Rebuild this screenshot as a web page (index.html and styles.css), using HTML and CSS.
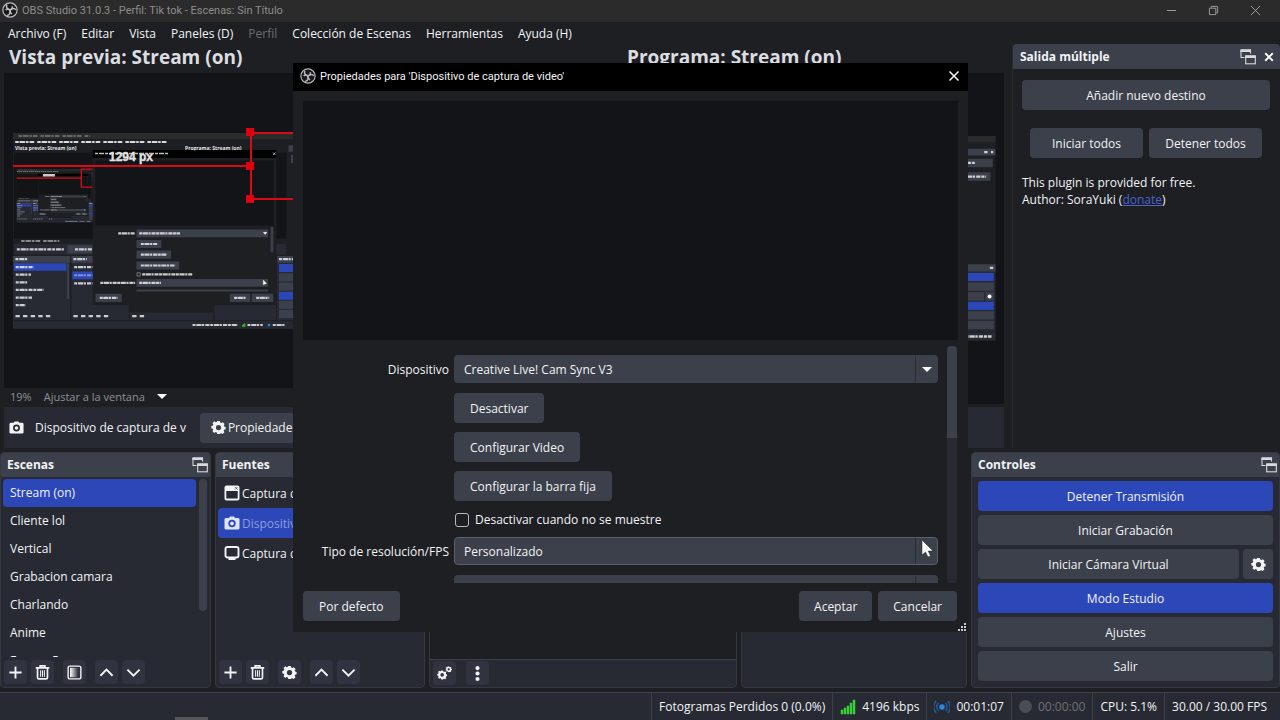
FILE: index.html
```html
<!DOCTYPE html>
<html lang="es">
<head>
<meta charset="utf-8">
<title>OBS Studio 31.0.3</title>
<link rel="stylesheet" href="styles.css">
</head>
<body>
<svg class="defs" aria-hidden="true">
  <defs>
    <linearGradient id="fade" x1="0" x2="1"><stop offset="0" stop-color="#fff"/><stop offset="1" stop-color="#272a33"/></linearGradient>
    <symbol id="i-obs" viewBox="0 0 24 24">
      <circle cx="12" cy="12" r="10.7" fill="#17181b" stroke="currentColor" stroke-width="1.8"/>
      <g fill="none" stroke="currentColor" stroke-width="2.2">
        <path d="M7.2 4.2c-1.2 3.6 0.6 6.8 4.9 7.6 2.6-.6 4-3 3.2-5.4"/>
        <path d="M7.2 4.2c-1.2 3.6 0.6 6.8 4.9 7.6 2.6-.6 4-3 3.2-5.4" transform="rotate(120 12 12)"/>
        <path d="M7.2 4.2c-1.2 3.6 0.6 6.8 4.9 7.6 2.6-.6 4-3 3.2-5.4" transform="rotate(240 12 12)"/>
      </g>
    </symbol>
    <symbol id="i-gear" viewBox="0 0 16 16">
      <path fill="currentColor" fill-rule="evenodd" d="M6.6 1h2.8l.4 1.7 1.3.6 1.5-1 1.9 2-.9 1.5.5 1.2 1.5.4v2.4l-1.6.5-.5 1.2.9 1.5-1.9 1.9-1.5-.9-1.2.5L9.4 15H6.6l-.4-1.6-1.3-.5-1.5.9-1.8-1.900.8-1.5-.5-1.2-1.6-.4V6.500l1.600-.4.6-1.300-.9-1.500 1.900-1.900 1.500.9 1.200-.5zM8 5.200a2.800 2.800 0 1 0 0 5.600 2.800 2.800 0 0 0 0-5.600z"/>
    </symbol>
    <symbol id="i-cam" viewBox="0 0 16 16">
      <path fill="currentColor" fill-rule="evenodd" d="M5 3l1-1.500h4L11 3h3.500l1 1v9.500l-1 1h-13l-1-1V4l1-1zM8 4.800a3.700 3.700 0 1 0 0 7.400 3.700 3.700 0 0 0 0-7.400zm0 1.800a1.900 1.900 0 1 1 0 3.800 1.900 1.900 0 0 1 0-3.800z"/>
    </symbol>
    <symbol id="i-win" viewBox="0 0 16 16">
      <path fill="currentColor" fill-rule="evenodd" d="M2.500.5h11a2 2 0 0 1 2 2v11a2 2 0 0 1-2 2h-11a2 2 0 0 1-2-2v-11a2 2 0 0 1 2-2zM2.300 6v7.500h11.400V6z"/>
      <path d="M11 2l2.500 2.500M13.500 2L11 4.500" stroke="#555" stroke-width=".8"/>
    </symbol>
    <symbol id="i-mon" viewBox="0 0 16 16">
      <rect x="1.500" y="2" width="13" height="10.500" rx="2" fill="none" stroke="currentColor" stroke-width="1.900"/><path d="M4.500 13h7v2h-7z" fill="currentColor"/>
    </symbol>
    <symbol id="i-plus" viewBox="0 0 16 16"><path d="M8 1.500v13M1.500 8h13" stroke="currentColor" stroke-width="2" fill="none"/></symbol>
    <symbol id="i-trash" viewBox="0 0 16 16">
      <path d="M.8 3h14.400M5.500 2.500V1h5v1.500M2.700 4v9.200q0 1.600 1.600 1.600h7.400q1.600 0 1.600-1.600V4" stroke="currentColor" stroke-width="1.800" fill="none"/>
      <path d="M6 5.500v7M8 5.500v7M10 5.500v7" stroke="currentColor" stroke-width="1.100"/>
    </symbol>
    <symbol id="i-filter" viewBox="0 0 16 16"><rect x="1.200" y="1.200" width="13.600" height="13.600" rx="2" fill="none" stroke="currentColor" stroke-width="1.500"/><rect x="3.200" y="3" width="9" height="10" fill="url(#fade)"/></symbol>
    <symbol id="i-up" viewBox="0 0 16 16"><path d="M1.500 11.500L8 5l6.500 6.500" stroke="currentColor" stroke-width="2" fill="none"/></symbol>
    <symbol id="i-down" viewBox="0 0 16 16"><path d="M1.500 5L8 11.500 14.500 5" stroke="currentColor" stroke-width="2" fill="none"/></symbol>
    <symbol id="i-dots" viewBox="0 0 16 16"><g fill="currentColor"><circle cx="8" cy="2.200" r="2.200"/><circle cx="8" cy="8" r="2.200"/><circle cx="8" cy="13.800" r="2.200"/></g></symbol>
    <symbol id="i-gears" viewBox="0 0 16 16">
      <use href="#i-gear" x="0" y="4" width="11" height="11"/><use href="#i-gear" x="9" y="0" width="7" height="7"/>
    </symbol>
    <symbol id="i-float" viewBox="0 0 16 16">
      <path d="M1 1h9.500v3.500M1 1v7.500h3.500" fill="none" stroke="currentColor" stroke-width="1.100"/><path d="M.4.400h10.600v2.600H.4z" fill="currentColor"/>
      <rect x="5.700" y="7" width="9.600" height="7.800" fill="none" stroke="currentColor" stroke-width="1.100"/><path d="M5.200 6.400h10.700v2.600H5.200z" fill="currentColor"/>
    </symbol>
    <symbol id="i-x" viewBox="0 0 16 16"><path d="M2 2l12 12M14 2L2 14" stroke="currentColor" stroke-width="var(--w,2)" fill="none"/></symbol>

    <g id="mini">
      <path fill="#1d1f23" d="M0 0h1280v720H0z"/><path fill="#2b2b2b" d="M0 0h1280v22H0z"/>
      <path fill="#131417" d="M4 73h1001v315H4z"/>
      <g stroke="#d8d9dc" stroke-width="7" stroke-dasharray="13 3 21 3 9 4 17 11">
        <path d="M20 11h262" stroke="#666"/><path d="M8 33h562"/><path d="M30 397h140" stroke="#888"/>
      </g>
      <g fill="#272a33"><path d="M4 407h1001v41H4zM0 452h210v236H0zM215 452h210v236H215zM429 660h308v28H429zM741 452h226v236H741zM971 452h309v236H971zM0 692h1280v28H0z"/></g>
      <g fill="#3c404b"><path d="M200 413h93v30H200zM0 452h210v25H0zM215 452h210v25H215zM971 452h309v25H971zM1013 45h267v24h-267zM1022 80h248v30h-248zM1030 128h113v30h-113zM1149 128h113v30h-113zM978 516h296v29H978zM978 550h262v29H978zM1245 550h29v29h-29zM978 617h296v29H978zM978 651h296v29H978zM198 480h8v130h-8z"/></g>
      <path fill="#2c47b8" d="M3 479h193v27H3zM218 509h80v29h-80zM978 482h296v29H978zM978 584h296v29H978z"/>
      <g stroke="#e8e9ed" stroke-width="8" stroke-dasharray="11 3 19 2 8 4 15 3" opacity=".85">
        <path d="M14 428h173M228 428h65M9 464h46M222 464h50M10 493h66M10 521h56M10 549h42M10 577h102M10 605h60M10 633h36M225 493h68M225 553h68M1067 95h140M1050 143h74M1165 143h82M978 464h60M660 706h166M862 706h56M955 706h44M1100 706h55M1174 706h92"/>
        <path d="M9 673h130M222 673h140M438 673h50M1240 57h12M1264 57h8M1260 464h12" stroke-dasharray="16 12"/><path d="M225 523h68" stroke="#8fa0e0"/>
      </g>
      <circle cx="1259" cy="565" r="7" fill="#fff"/>
      <path fill="#1d1f23" d="M293 63h675v569H293z"/><path fill="#000" d="M293 63h675v28H293z"/><path fill="#131417" d="M303 101h655v239H303z"/>
      <path fill="#3c404b" d="M454 355h484v28H454zM454 393h91v30h-91zM454 432h127v30H454zM454 472h157v30H454zM454 537h484v28H454zM454 575h484v8H454zM303 591h97v30h-97zM797 591h75v30h-75zM878 591h79v30h-79zM947 346h10v92h-10z"/>
      <g stroke="#e8e9ed" stroke-width="8" stroke-dasharray="11 2 19 2 8 3 15 2" opacity=".85"><path d="M387 369h62M464 369h150M470 408h60M470 447h95M470 487h126M475 520h186M321 551h128M464 551h80M319 606h65M813 606h44M894 606h48"/></g>
      <path d="M920 365l7 8 7-8zM920 540v18l12-5zM948 71l10 10m0-10l-10 10" fill="#fff" stroke="#fff"/>
      <path d="M456 514h12v12h-12z" fill="none" stroke="#bbb" stroke-width="2"/>
      <path d="M842 712v-6h3v6zm4 0v-9h3v9zm4 0v-12h4v12z" fill="#38d039"/><circle cx="941" cy="706" r="5" fill="#287fd4"/>
    </g>
    <clipPath id="left"><path d="M4 73h289v315H4z"/></clipPath>
  </defs>
</svg>

<div class="app">
  <header class="titlebar">
    <svg class="logo"><use href="#i-obs"/></svg>
    <span class="caption">OBS Studio 31.0.3 - Perfil: Tik tok - Escenas: Sin Título</span>
    <div class="winbtns">
      <button aria-label="Minimizar"><svg viewBox="0 0 12 12"><path d="M1 6h10" stroke="currentColor"/></svg></button>
      <button aria-label="Restaurar"><svg viewBox="0 0 12 12"><path d="M1.500 3.500h7v7h-7zM3.500 3V1.500h7v7H9" stroke="currentColor" fill="none"/></svg></button>
      <button aria-label="Cerrar"><svg viewBox="0 0 12 12"><path d="M1 1l10 10M11 1L1 11" stroke="currentColor"/></svg></button>
    </div>
  </header>
  <nav class="menu">
    <button>Archivo (F)</button><button>Editar</button><button>Vista</button><button>Paneles (D)</button><button disabled>Perfil</button><button>Colección de Escenas</button><button>Herramientas</button><button>Ayuda (H)</button>
  </nav>

  <main class="work">
    <section class="studio">
      <div class="views">
        <div class="view">
          <h2>Vista previa: Stream (on)</h2>
          <div class="canvas">
            <svg class="preview" viewBox="0 0 500 315">
              <g transform="translate(9 60)">
                <use href="#mini" transform="scale(.272)"/>
                <g transform="scale(.272)"><g clip-path="url(#left)">
                  <use href="#mini" transform="translate(13 133) scale(.272)"/>
                  <path d="M13 166h238M293 133h-42v66h42" fill="none" stroke="#d2101a" stroke-width="5"/><path d="M110 151h44v9h-44z" fill="#ccc"/>
                </g></g>
                <text class="tiny" x="2" y="17">Vista previa: Stream (on)</text><text class="tiny" x="172" y="17">Programa: Stream (on)</text>
                <path d="M80 17.200h183v7.600H80z" fill="#000"/>
                <path d="M82 20.500h73" stroke="#bbb" stroke-width="1.500" stroke-dasharray="3 1 5 1"/>
                <path d="M260 19.500l2.500 2.500m0-2.500l-2.500 2.500" stroke="#ddd" stroke-width=".7"/>
              </g>
              <path d="M9 93h238M300 60h-53v66h53" fill="none" stroke="#d60b16" stroke-width="2"/>
              <path d="M242 55h8v8h-8zM242 89h8v8h-8zM242 122h8v8h-8z" fill="#e0000f"/>
              <text class="measure" x="105" y="88">1294 px</text>
            </svg>
          </div>
          <div class="zoom"><span>19%</span><label for="fit">Ajustar a la ventana</label><button id="fit" aria-label="Ajustar a la ventana"><i class="tri"></i></button></div>
        </div>
        <div class="view program">
          <h2>Programa: Stream (on)</h2>
          <div class="canvas"><svg class="output" viewBox="0 0 382 331"><g transform="translate(10 63) scale(.284)"><use href="#mini"/></g></svg></div>
        </div>
      </div>
      <div class="source">
        <svg class="ic14"><use href="#i-cam"/></svg><span>Dispositivo de captura de v</span>
        <button class="btn"><svg class="ic14"><use href="#i-gear"/></svg>Propiedades</button>
      </div>
    </section>

    <aside class="multi">
      <header class="dockhead"><h3>Salida múltiple</h3><button aria-label="Flotar"><svg class="ic16"><use href="#i-float"/></svg></button><button aria-label="Cerrar"><svg class="ic10"><use href="#i-x"/></svg></button></header>
      <div class="multibody">
        <button class="btn">Añadir nuevo destino</button>
        <div class="pair"><button class="btn">Iniciar todos</button><button class="btn">Detener todos</button></div>
        <p>This plugin is provided for free.<br>Author: SoraYuki (<a href="#">donate</a>)</p>
      </div>
    </aside>
  </main>

  <section class="docks">
    <section class="dock">
      <header class="dockhead"><h3>Escenas</h3><button aria-label="Flotar"><svg class="ic16"><use href="#i-float"/></svg></button></header>
      <div class="scenes">
        <ul><li class="on">Stream (on)</li><li>Cliente lol</li><li>Vertical</li><li>Grabacion camara</li><li>Charlando</li><li>Anime</li><li>Escena 5</li></ul>
        <div class="bar"></div>
      </div>
      <div class="tools"><button aria-label="Añadir"><svg><use href="#i-plus"/></svg></button><button aria-label="Eliminar"><svg><use href="#i-trash"/></svg></button><button class="gap" aria-label="Filtros"><svg><use href="#i-filter"/></svg></button><button class="gap" aria-label="Subir"><svg><use href="#i-up"/></svg></button><button aria-label="Bajar"><svg><use href="#i-down"/></svg></button></div>
    </section>
    <section class="dock">
      <header class="dockhead"><h3>Fuentes</h3></header>
      <ul class="sources"><li><svg class="ic16"><use href="#i-win"/></svg>Captura de</li><li class="on"><svg class="ic16"><use href="#i-cam"/></svg>Dispositivo</li><li><svg class="ic16"><use href="#i-mon"/></svg>Captura de</li></ul>
      <div class="tools"><button aria-label="Añadir"><svg><use href="#i-plus"/></svg></button><button aria-label="Eliminar"><svg><use href="#i-trash"/></svg></button><button class="gap" aria-label="Propiedades"><svg><use href="#i-gear"/></svg></button><button class="gap" aria-label="Subir"><svg><use href="#i-up"/></svg></button><button aria-label="Bajar"><svg><use href="#i-down"/></svg></button></div>
    </section>
    <section class="dock mixer">
      <header class="dockhead"></header><div class="meters"></div>
      <div class="tools"><button aria-label="Propiedades de audio"><svg><use href="#i-gears"/></svg></button><button class="gap" aria-label="Más"><svg><use href="#i-dots"/></svg></button></div>
    </section>
    <section class="dock"><header class="dockhead"></header></section>
    <section class="dock">
      <header class="dockhead"><h3>Controles</h3><button aria-label="Flotar"><svg class="ic16"><use href="#i-float"/></svg></button></header>
      <div class="controls">
        <button class="btn blue">Detener Transmisión</button><button class="btn">Iniciar Grabación</button>
        <div class="cam"><button class="btn">Iniciar Cámara Virtual</button><button class="btn" aria-label="Configurar cámara"><svg class="ic14"><use href="#i-gear"/></svg></button></div>
        <button class="btn blue">Modo Estudio</button><button class="btn">Ajustes</button><button class="btn">Salir</button>
      </div>
    </section>
  </section>

  <footer class="status">
    <i class="grip"></i>
    <span>Fotogramas Perdidos 0 (0.0%)</span>
    <span><svg class="ic16" viewBox="0 0 16 16"><path d="M1 15v-4h2v4zM4 15V9h2v6zM7 15V7h2v8zM10 15V4h2v11zM13 15V1h2v14z" fill="#38d039" stroke="#38d039" stroke-width=".5"/></svg>4196 kbps</span>
    <span><svg class="ic16" viewBox="0 0 16 16"><circle cx="8" cy="8" r="2.800" fill="#2f86e0"/><path d="M4.500 4a5.500 5.500 0 0 0 0 8M11.500 4a5.500 5.500 0 0 1 0 8M2.200 2a8.500 8.500 0 0 0 0 12M13.800 2a8.500 8.500 0 0 1 0 12" fill="none" stroke="#235c9e" stroke-width="1.500"/></svg>00:01:07</span>
    <span class="off"><i class="rec"></i>00:00:00</span>
    <span>CPU: 5.1%</span>
    <span>30.00 / 30.00 FPS</span>
  </footer>

  <section class="dialog" role="dialog" aria-label="Propiedades">
    <header><svg class="logo"><use href="#i-obs"/></svg><span>Propiedades para 'Dispositivo de captura de video'</span><button aria-label="Cerrar"><svg class="ic12"><use href="#i-x"/></svg></button></header>
    <div class="camview"></div>
    <div class="scroll">
      <form class="form">
        <label for="dev">Dispositivo</label>
        <div class="combo"><select id="dev"><option>Creative Live! Cam Sync V3</option></select><i class="tri"></i></div>
        <button type="button" class="btn">Desactivar</button>
        <button type="button" class="btn">Configurar Video</button>
        <button type="button" class="btn">Configurar la barra fija</button>
        <div class="check"><input type="checkbox" id="hide"><label for="hide">Desactivar cuando no se muestre</label></div>
        <label for="res">Tipo de resolución/FPS</label>
        <div class="combo focus"><select id="res"><option>Personalizado</option></select></div>
        <div class="combo"><select aria-label="Resolución"></select></div>
      </form>
      <div class="bar"></div>
    </div>
    <footer><button class="btn">Por defecto</button><button class="btn">Aceptar</button><button class="btn">Cancelar</button></footer>
    <svg class="sizer" viewBox="0 0 9 9"><path d="M6 0h2v2H6zM3 3h2v2H3zM6 3h2v2H6zM0 6h2v2H0zM3 6h2v2H3zM6 6h2v2H6z" fill="#c8c9cc"/></svg>
    <svg class="pointer" viewBox="0 0 12 18"><path d="M1 0v15l3.500-3 2.500 5 2.500-1-2.300-5H12z" fill="#fff" stroke="#222" stroke-width=".5"/></svg>
  </section>
</div>
</body>
</html>
```
FILE: styles.css
```css
* { box-sizing: border-box; }
body { margin: 0; background: #1d1f23; color: #f2f3f5; font: 12px/17px "Open Sans", "Noto Sans", sans-serif; overflow: hidden; }
button, select, input { font: inherit; color: inherit; margin: 0; }
button { background: none; border: 0; padding: 0; display: flex; align-items: center; justify-content: center; }
h2, h3, p, ul { margin: 0; padding: 0; }
ul { list-style: none; }
svg { display: block; flex: none; }
.defs { position: absolute; width: 0; height: 0; }
.ic10 { width: 10px; height: 10px; --w: 3; }
.ic12 { width: 12px; height: 12px; }
.ic14 { width: 15px; height: 15px; }
.ic16 { width: 16px; height: 16px; }
.logo { width: 16px; height: 16px; }
.tri { width: 0; height: 0; border: 5px solid transparent; border-top-color: #fff; border-bottom: 0; }

.app { position: relative; min-height: 100vh; display: flex; flex-direction: column; }
.titlebar { height: 22px; background: #2b2b2b; color: #8d8d8d; display: flex; align-items: center; gap: 4px; padding: 0 4px 2px 2px; font-size: 11px; font-family: Roboto, "Open Sans", sans-serif; }
.titlebar .logo { color: #c0c0c0; }
.caption { flex: 1; }
.winbtns { display: flex; }
.winbtns button { width: 42px; height: 20px; color: #a5a5a5; }
.winbtns svg { width: 11px; height: 11px; }
.menu { display: flex; gap: 15px; padding: 0 8px; height: 22px; }
.menu button:disabled { color: #6b6d70; }

.work { flex: 1; display: flex; gap: 8px; padding-bottom: 4px; min-height: 0; }
.studio { flex: 1; display: flex; flex-direction: column; padding-left: 4px; min-width: 0; }
.views { flex: 1; display: flex; }
.view { flex: 1; display: flex; flex-direction: column; }
.program { flex: 0 0 381px; padding-bottom: 3px; }
.view h2 { font-size: 19px; line-height: 26px; height: 29px; padding-left: 5px; color: #dcdde0; }
.canvas { flex: 1; background: #131417; overflow: hidden; }
.preview { width: 500px; height: 315px; }
.output { width: 382px; height: 331px; }
.tiny { font: bold 5px "Open Sans", sans-serif; fill: #e6e6e6; }
.measure { font: bold 12px "Liberation Sans", sans-serif; fill: #e2e2e2; stroke: #e2e2e2; stroke-width: .4px; }
.zoom { height: 19px; display: flex; align-items: center; padding: 0 6px 2px; color: #8f9195; font-size: 11px; gap: 12px; }
.source { height: 41px; background: #272a33; display: flex; align-items: center; gap: 11px; padding-left: 5px; }
.source .btn { padding: 0 11px; gap: 2px; margin-left: 3px; }
.btn { height: 30px; background: #3c404b; border-radius: 4px; padding: 0 16px; white-space: nowrap; }
.blue { background: #2c47b8; }

.multi { width: 268px; display: flex; flex-direction: column; border-left: 1px solid #292b31; }
.dockhead { height: 25px; background: #3c404b; border-radius: 4px 4px 0 0; display: flex; align-items: center; gap: 8px; padding: 0 3px 0 7px; }
.dockhead h3 { flex: 1; font-size: 12px; }
.dockhead button { color: #d8d9dd; }
.dockhead .ic10 { margin-right: 6px; color: #fff; }
.multi .dockhead { padding-right: 0; }
.multibody { padding: 11px 10px 10px 9px; display: flex; flex-direction: column; gap: 18px; }
.pair { display: grid; grid-template-columns: 1fr 1fr; gap: 6px; padding: 0 8px; }
.pair .btn { padding: 0; }
.multibody p { margin-top: -2px; }
.multibody a { color: #4b62cf; }

.docks { display: grid; grid-template-columns: 211px 210px 1fr 226px 309px; gap: 4px; height: 236px; }
.dock { background: #272a33; border: 1px solid #353843; border-radius: 4px; display: flex; flex-direction: column; min-width: 0; overflow: hidden; }
.dock .dockhead { margin: -1px -1px 0; flex: none; }
.scenes { flex: 1; display: flex; justify-content: space-between; padding: 2px 3px 0 2px; min-height: 0; }
.scenes ul { width: 193px; overflow: hidden; height: 178px; }
.scenes li { height: 28px; line-height: 28px; padding-left: 7px; border-radius: 4px; }
.on { background: #2c47b8; }
.bar { background: #3c404b; border-radius: 4px; }
.scenes .bar { width: 8px; height: 132px; }
.tools { display: flex; gap: 4px; height: 27px; padding-left: 3px; flex: none; margin-top: auto; }
.tools button { width: 23px; height: 24px; background: #313440; border-radius: 4px; }
.tools .gap { margin-left: 5px; }
.tools svg { width: 15px; height: 15px; }
.sources { padding: 1px 2px; }
.sources li { height: 30px; display: flex; align-items: center; gap: 2px; padding-left: 6px; border-radius: 4px; white-space: nowrap; }
.sources .on { color: #8c9ddd; }
.sources .on svg { color: #dfe4fa; }
.meters { flex: 1; background: #1d1f23; border-bottom: 1px solid #3c404b; }
.mixer .tools { padding-top: 1px; }
.mixer .tools .gap { margin-left: 6px; }
.controls { padding: 4px 6px; display: flex; flex-direction: column; gap: 4px; }
.cam { display: flex; gap: 4px; }
.cam .btn:first-child { flex: 1; }
.cam .btn:last-child { width: 30px; padding: 0; }

.status { height: 28px; margin-top: 4px; background: #272a33; border-top: 1px solid #3c404b; display: flex; justify-content: flex-end; align-items: stretch; }
.status span { border-left: 1px solid #3c404b; display: flex; align-items: center; gap: 6px; padding: 0 7px; }
.status span:last-child { padding-right: 13px; }
.grip { width: 33px; height: 3px; background: #54565c; align-self: flex-end; margin: 0 auto 0 175px; }
.status .off { color: #6f7178; }
.rec { width: 13px; height: 13px; border-radius: 50%; background: #4b4d56; }

.dialog { position: absolute; left: 293px; top: 63px; right: 312px; background: #1d1f23; display: flex; flex-direction: column; }
.dialog header { height: 28px; background: #000; display: flex; align-items: center; gap: 4px; padding: 0 8px 2px 7px; font-size: 11px; font-family: Roboto, "Open Sans", sans-serif; }
.dialog header span { flex: 1; }
.dialog header .logo { color: #b5b5b5; }
.camview { height: 239px; margin: 10px 10px 6px; background: #131417; }
.scroll { height: 237px; overflow: hidden; display: flex; gap: 9px; padding: 0 11px 0 10px; }
.scroll > .bar { width: 10px; background: linear-gradient(#3c404b 92px, #272a33 92px); }
.form { flex: 1; display: grid; grid-template-columns: 146px 1fr; column-gap: 5px; row-gap: 10px; padding-top: 9px; align-content: start; }
.form > label { text-align: right; align-self: center; }
.form > .btn { grid-column: 2; justify-self: start; }
.form .btn + .btn { margin-top: -1px; }
.check { grid-column: 2; display: flex; align-items: flex-end; gap: 6px; height: 16px; line-height: 15px; }
.check input { appearance: none; width: 14px; height: 14px; border: 1px solid #b9bac0; border-radius: 3px; margin-left: 1px; }
.combo { grid-column: 2; position: relative; height: 28px; }
.combo select { appearance: none; width: 100%; height: 100%; border: 1px solid transparent; border-radius: 4px; background: linear-gradient(90deg, #2b2d36 1px, #3c404b 1px) right / 22px 100% no-repeat #3c404b; padding: 0 9px; }
.combo.focus select { border-color: #5a5f6e; }
.combo .tri { position: absolute; right: 6px; top: 12px; }
.dialog footer { display: flex; gap: 6px; padding: 8px 11px 11px 10px; }
.dialog footer .btn { padding: 0 15px; }
.dialog footer .btn:first-child { margin-right: auto; padding: 0 16px; }
.sizer { position: absolute; right: 1px; bottom: 0; width: 9px; height: 9px; }
.pointer { position: absolute; left: 628px; top: 477px; width: 12px; height: 18px; }
```
